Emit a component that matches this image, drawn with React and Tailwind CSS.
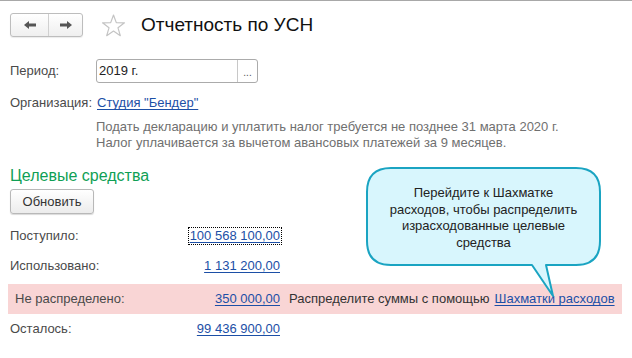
import React from 'react';

const ArrowLeft = () => (
  <svg width="14" height="10" viewBox="0 0 14 10">
    <path d="M1 5 L6 1 L6 3.5 L13 3.5 L13 6.5 L6 6.5 L6 9 Z" fill="#555555" />
  </svg>
);

const ArrowRight = () => (
  <svg width="14" height="10" viewBox="0 0 14 10">
    <path d="M13 5 L8 1 L8 3.5 L1 3.5 L1 6.5 L8 6.5 L8 9 Z" fill="#555555" />
  </svg>
);

const Star = () => (
  <svg width="25" height="23" viewBox="0 0 25 23">
    <path
      d="M12.5 1 L15.3 8.6 L23.5 8.8 L17 13.8 L19.3 21.7 L12.5 17 L5.7 21.7 L8 13.8 L1.5 8.8 L9.7 8.6 Z"
      fill="none"
      stroke="#c4c4c4"
      strokeWidth="1.2"
      strokeLinejoin="round"
    />
  </svg>
);

const Amount = ({ value, focused }) => (
  <span
    className={
      'text-[#1c4fa6] underline underline-offset-2 leading-[16px] px-[1px] ' +
      (focused ? 'outline outline-1 outline-dotted outline-black' : '')
    }
  >
    {value}
  </span>
);

const Callout = () => (
  <div className="absolute left-[360px] top-[160px] w-[250px] h-[140px]">
    <svg width="250" height="140" viewBox="0 0 250 140" className="absolute left-0 top-0">
      <path
        d="M31 7 L216 7 Q240 7 240 31 L240 80 Q240 104 216 104 L186 104 L193 135 L172 104 L31 104 Q7 104 7 80 L7 31 Q7 7 31 7 Z"
        fill="#d8f6fd"
        stroke="#1aa4c2"
        strokeWidth="2"
        strokeLinejoin="round"
      />
    </svg>
    <div className="absolute left-[7px] top-[24px] w-[233px] text-center text-[13px] leading-[16.5px] text-[#222]">
      Перейдите к Шахматке
      <br />
      расходов, чтобы распределить
      <br />
      израсходованные целевые
      <br />
      средства
    </div>
  </div>
);

export default function App() {
  return (
    <div className="relative w-[632px] h-[358px] overflow-hidden bg-white border-t border-[#a8a8a8] font-['Liberation_Sans',Arial,sans-serif] text-[13px] text-[#4a4a4a]">
      {/* header */}
      <div className="flex items-center h-[24px] mt-[12px] pl-[10px]">
        <div className="flex w-[73px] h-[24px] border border-[#bdbdbd] rounded-[3px] bg-gradient-to-b from-white to-[#efefef] shadow-[0_1px_1px_rgba(0,0,0,0.08)]">
          <div className="w-[38px] flex items-center justify-center border-r border-[#d0d0d0]">
            <ArrowLeft />
          </div>
          <div className="flex-1 flex items-center justify-center">
            <ArrowRight />
          </div>
        </div>
        <div className="ml-[18px] flex items-center">
          <Star />
        </div>
        <div className="ml-[15px] text-[19px] text-[#111] leading-[24px]">Отчетность по УСН</div>
      </div>

      {/* period */}
      <div className="flex items-center mt-[22px] pl-[10px] h-[24px]">
        <div className="w-[86px]">Период:</div>
        <div className="flex w-[162px] h-[24px] border border-[#ababab] rounded-[3px] bg-white">
          <div className="flex-1 flex items-center pl-[2px] text-[#222]">2019 г.</div>
          <div className="w-[20px] border-l border-[#c8c8c8] flex items-center justify-center text-[10px] text-[#555] pt-[3px]">
            ...
          </div>
        </div>
      </div>

      {/* organization */}
      <div className="flex items-center mt-[12px] pl-[10px] h-[16px]">
        <div className="w-[87px]">Организация:</div>
        <span className="text-[#1c4fa6] underline underline-offset-2">Студия "Бендер"</span>
      </div>

      <div className="mt-[8px] pl-[96px] leading-[16px] text-[#707070]">
        <div>Подать декларацию и уплатить налог требуется не позднее 31 марта 2020 г.</div>
        <div>Налог уплачивается за вычетом авансовых платежей за 9 месяцев.</div>
      </div>

      {/* target funds */}
      <div className="mt-[15px] pl-[10px] text-[16px] leading-[20px] text-[#0f9f55]">Целевые средства</div>

      <div className="mt-[3px] pl-[10px]">
        <button className="w-[84px] h-[25px] border border-[#b8b8b8] rounded-[3px] bg-gradient-to-b from-white to-[#ececec] shadow-[0_1px_1px_rgba(0,0,0,0.15)] text-[13px] text-[#333]">
          Обновить
        </button>
      </div>

      <div className="mt-[7px] pl-[10px] flex items-center justify-between w-[281px] h-[30px]">
        <span>Поступило:</span>
        <Amount value="100 568 100,00" focused />
      </div>

      <div className="pl-[10px] flex items-center justify-between w-[281px] h-[30px]">
        <span>Использовано:</span>
        <Amount value="1 131 200,00" />
      </div>

      <div className="mt-[3px] ml-[8px] w-[614px] h-[30px] bg-[#f9d5d5] flex items-center pl-[7px]">
        <div className="w-[266px] flex items-center justify-between">
          <span>Не распределено:</span>
          <Amount value="350 000,00" />
        </div>
        <span className="ml-[8px] text-[#333]">Распределите суммы с помощью</span>
        <span className="ml-[5px] text-[#1c4fa6] underline underline-offset-2">Шахматки расходов</span>
      </div>

      <div className="pl-[10px] flex items-center justify-between w-[281px] h-[30px]">
        <span>Осталось:</span>
        <Amount value="99 436 900,00" />
      </div>

      <Callout />
    </div>
  );
}
